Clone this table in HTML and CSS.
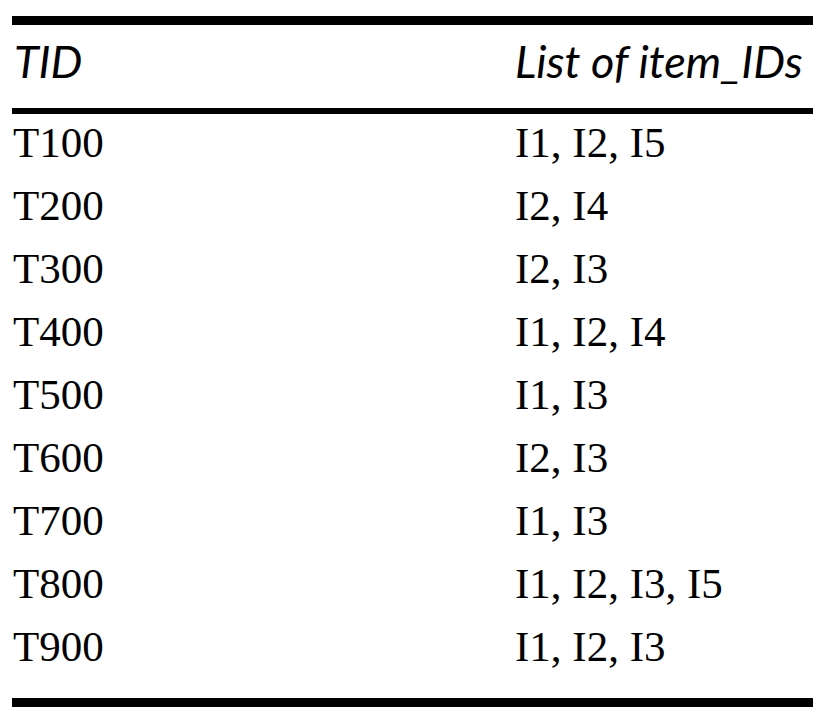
FILE: index.html
```html
<!DOCTYPE html>
<html>
<head>
<meta charset="utf-8">
<link rel="stylesheet" href="styles.css">
</head>
<body>
<div class="table">
  <div class="row head">
    <div class="c1">TID</div>
    <div class="c2">List of item_IDs</div>
  </div>
  <div class="body">
    <div class="row"><div class="c1">T100</div><div class="c2">I1, I2, I5</div></div>
    <div class="row"><div class="c1">T200</div><div class="c2">I2, I4</div></div>
    <div class="row"><div class="c1">T300</div><div class="c2">I2, I3</div></div>
    <div class="row"><div class="c1">T400</div><div class="c2">I1, I2, I4</div></div>
    <div class="row"><div class="c1">T500</div><div class="c2">I1, I3</div></div>
    <div class="row"><div class="c1">T600</div><div class="c2">I2, I3</div></div>
    <div class="row"><div class="c1">T700</div><div class="c2">I1, I3</div></div>
    <div class="row"><div class="c1">T800</div><div class="c2">I1, I2, I3, I5</div></div>
    <div class="row"><div class="c1">T900</div><div class="c2">I1, I2, I3</div></div>
  </div>
</div>
</body>
</html>
```
FILE: styles.css
```css
html, body {
  margin: 0;
  padding: 0;
  background: #fff;
}
.table {
  margin: 16px 0 0 12px;
  width: 801px;
  border-top: 9px solid #000;
  border-bottom: 9px solid #000;
  color: #000;
}
.row {
  display: grid;
  grid-template-columns: 503px 1fr;
}
.head {
  height: 89px;
  box-sizing: border-box;
  padding-top: 14px;
  border-bottom: 6px solid #000;
  font-family: Lato, "Open Sans", sans-serif;
  font-style: italic;
  font-size: 45px;
  line-height: 1;
}
.head .c1 {
  padding-left: 2px;
}
.body {
  padding-bottom: 17px;
  font-family: "Liberation Serif", "Times New Roman", serif;
  font-size: 43px;
}
.body .row {
  line-height: 57px;
  padding-bottom: 6px;
}
.body .c1 {
  padding-left: 1px;
}
```
